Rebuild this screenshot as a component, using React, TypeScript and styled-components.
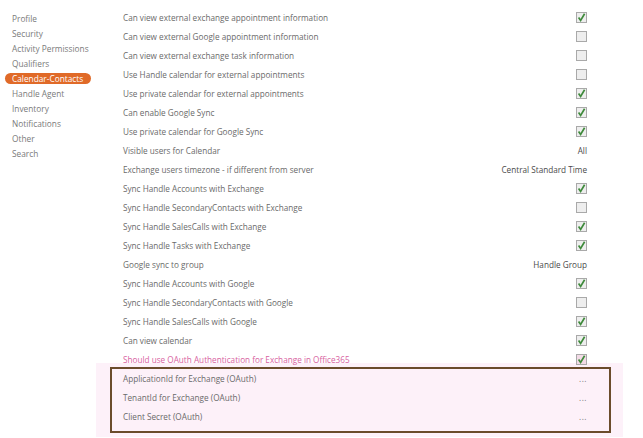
import React from 'react';
import styled, {createGlobalStyle} from 'styled-components';

const GlobalStyle = createGlobalStyle`
    body {
        margin: 0;
        background: #ffffff;
        font-family: 'Open Sans', 'Liberation Sans', sans-serif;
    }
`;

const Page = styled.div`
    display: flex;
    width: 643px;
    height: 438px;
    overflow: hidden;
`;

const Sidebar = styled.ul`
    list-style: none;
    margin: 0;
    padding: 11px 0 0 5px;
    width: 91px;
    flex-shrink: 0;
    white-space: nowrap;
`;

const NavItem = styled.li<{$active?: boolean}>`
    height: 15px;
    line-height: 15px;
    font-size: 8.3px;
    color: ${(p) => (p.$active ? '#ffffff' : '#7a7a7a')};
    .label {
        display: inline-block;
        height: 11px;
        line-height: 11px;
        padding: 0 8px 0 7px;
        border-radius: 6px;
        background: ${(p) => (p.$active ? '#e06a28' : 'transparent')};
    }
`;

const Main = styled.div`
    width: 527px;
    padding-top: 8px;
`;

const Row = styled.div<{$tone?: 'pink'}>`
    display: flex;
    align-items: center;
    justify-content: space-between;
    height: 19px;
    padding: 0 36px 0 27px;
    font-size: 8.2px;
    white-space: nowrap;
    color: ${(p) => (p.$tone === 'pink' ? '#d8629f' : '#6a6a6a')};
`;

const Value = styled.span`
    color: #4a4a4a;
`;

const Dots = styled.span`
    color: #7a7a7a;
    letter-spacing: 0.5px;
`;

const Highlight = styled.div`
    margin-top: -6px;
    padding: 4px 12px 4px 14px;
    background: #fdf1f9;
`;

const Framed = styled.div`
    border: 2px solid #6b4c2c;
    padding-bottom: 5px;
    ${Row} {
        padding: 0 22px 0 11px;
    }
`;

const Box = styled.span<{$tone?: 'pink'}>`
    display: inline-flex;
    width: 11px;
    height: 11px;
    box-sizing: border-box;
    border: 1px solid #a9a9a9;
    background: ${(p) => (p.$tone === 'pink' ? '#f3dbe7' : '#eeeeee')};
    svg {
        display: block;
    }
`;

function Check({checked, tone}: {checked: boolean; tone?: 'pink'}) {
    return (
        <Box $tone={tone}>
            {checked && (
                <svg width="9" height="9" viewBox="0 0 9 9">
                    <path d="M1.6 4.6 L3.6 7.4 L7.6 0.8" fill="none" stroke="#3f8a3c" strokeWidth="1.7" />
                </svg>
            )}
        </Box>
    );
}

const nav = [
    'Profile',
    'Security',
    'Activity Permissions',
    'Qualifiers',
    'Calendar-Contacts',
    'Handle Agent',
    'Inventory',
    'Notifications',
    'Other',
    'Search',
];

type Setting = {label: string; checked?: boolean; value?: string};

const settings: Setting[] = [
    {label: 'Can view external exchange appointment information', checked: true},
    {label: 'Can view external Google appointment information', checked: false},
    {label: 'Can view external exchange task information', checked: false},
    {label: 'Use Handle calendar for external appointments', checked: false},
    {label: 'Use private calendar for external appointments', checked: true},
    {label: 'Can enable Google Sync', checked: true},
    {label: 'Use private calendar for Google Sync', checked: true},
    {label: 'Visible users for Calendar', value: 'All'},
    {label: 'Exchange users timezone - if different from server', value: 'Central Standard Time'},
    {label: 'Sync Handle Accounts with Exchange', checked: true},
    {label: 'Sync Handle SecondaryContacts with Exchange', checked: false},
    {label: 'Sync Handle SalesCalls with Exchange', checked: true},
    {label: 'Sync Handle Tasks with Exchange', checked: true},
    {label: 'Google sync to group', value: 'Handle Group'},
    {label: 'Sync Handle Accounts with Google', checked: true},
    {label: 'Sync Handle SecondaryContacts with Google', checked: false},
    {label: 'Sync Handle SalesCalls with Google', checked: true},
    {label: 'Can view calendar', checked: true},
];

const oauth = ['ApplicationId for Exchange (OAuth)', 'TenantId for Exchange (OAuth)', 'Client Secret (OAuth)'];

export default function App() {
    return (
        <Page>
            <GlobalStyle />
            <Sidebar>
                {nav.map((item) => (
                    <NavItem key={item} $active={item === 'Calendar-Contacts'}>
                        <span className="label">{item}</span>
                    </NavItem>
                ))}
            </Sidebar>
            <Main>
                {settings.map((s) => (
                    <Row key={s.label}>
                        <span>{s.label}</span>
                        {s.value ? <Value>{s.value}</Value> : <Check checked={!!s.checked} />}
                    </Row>
                ))}
                <Row $tone="pink">
                    <span>Should use OAuth Authentication for Exchange in Office365</span>
                    <Check checked tone="pink" />
                </Row>
                <Highlight>
                    <Framed>
                        {oauth.map((label) => (
                            <Row key={label}>
                                <span>{label}</span>
                                <Dots>...</Dots>
                            </Row>
                        ))}
                    </Framed>
                </Highlight>
            </Main>
        </Page>
    );
}
